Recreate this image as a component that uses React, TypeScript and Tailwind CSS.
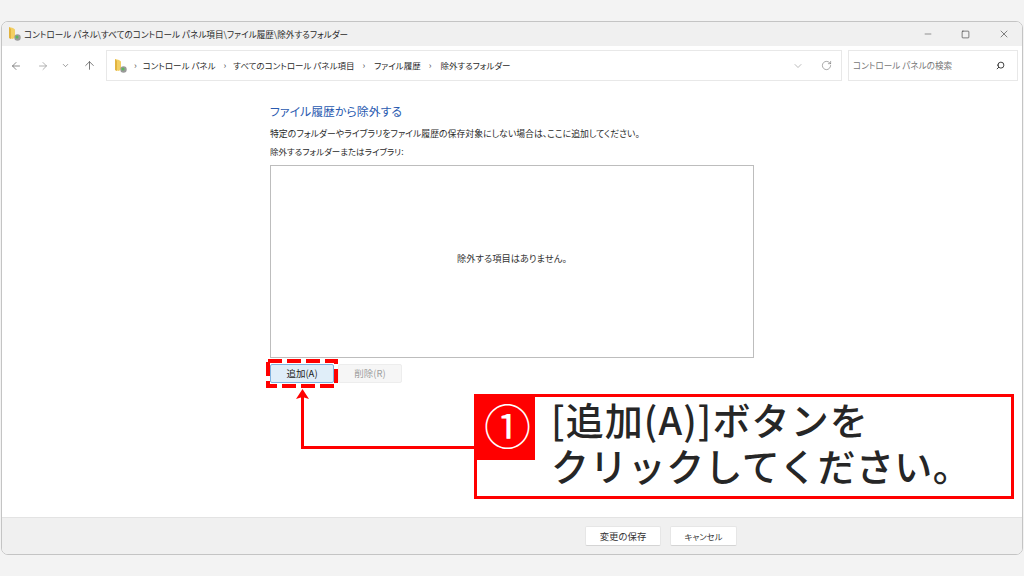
import { ArrowLeft, ArrowRight, ArrowUp, ChevronDown, RotateCw, Minus, X, Search, Square } from "lucide-react";

const jp = "[font-family:'Noto_Sans_CJK_JP','Noto_Sans',sans-serif] [font-feature-settings:'palt']";

function FolderIcon() {
  return (
    <svg width="16" height="16" viewBox="0 0 16 16" className="shrink-0">
      <path d="M2 1 L6 2 L8 3.5 L8 11 L6 13 L2 12 Z" fill="#f3cf63" />
      <path d="M2 1 L2 12 L4 13 L4 3 Z" fill="#e2b33f" />
      <circle cx="10.5" cy="11.5" r="3.2" fill="#9a9a9a" />
      <circle cx="10" cy="11" r="1.5" fill="#5cb85c" />
    </svg>
  );
}

function Sep() {
  return <span className="text-[9px] text-[#555] mx-[8px]">›</span>;
}

export default function App() {
  return (
    <div className={`relative w-[1024px] h-[576px] overflow-hidden bg-[#f3f3f3] pt-[21px] pl-px pr-px pb-[21px] ${jp}`}>
      <div className="w-full h-full flex flex-col rounded-[7px] border border-[#c4c4c4] overflow-hidden bg-white">
        {/* Title bar */}
        <div className="h-[24px] shrink-0 bg-[#f0f0f0] flex items-center pl-[5px] text-[#2a2a2a]">
          <FolderIcon />
          <span className="ml-px text-[8.6px] whitespace-nowrap">コントロール パネル\すべてのコントロール パネル項目\ファイル履歴\除外するフォルダー</span>
          <div className="ml-auto flex items-center gap-[28px] pr-[12px] text-[#333]">
            <Minus size={10} strokeWidth={1.2} />
            <Square size={9} strokeWidth={1.6} />
            <X size={12} strokeWidth={1.2} />
          </div>
        </div>
        {/* Address row */}
        <div className="h-[36px] shrink-0 flex items-center pt-[3px]">
          <div className="w-[104px] flex items-center pl-[8px] text-[#666]">
            <ArrowLeft size={12} strokeWidth={1.5} />
            <ArrowRight size={12} strokeWidth={1.5} className="ml-[15px] text-[#999]" />
            <ChevronDown size={9} strokeWidth={1.5} className="ml-[12px] text-[#555]" />
            <ArrowUp size={13} strokeWidth={1.3} className="ml-[13px] text-[#444]" />
          </div>
          <div className="w-[736px] h-[31px] border border-[#e8e8e8] flex items-center pl-[6px] pr-[9px] text-[8.5px] text-[#2a2a2a]">
            <FolderIcon />
            <span className="ml-[-3px] mr-[-2px] flex items-center">
              <Sep />
            </span>
            <span>コントロール パネル</span>
            <Sep />
            <span className="ml-[-1px]">すべてのコントロール パネル項目</span>
            <Sep />
            <span className="ml-px">ファイル履歴</span>
            <Sep />
            <span className="ml-px">除外するフォルダー</span>
            <ChevronDown size={12} strokeWidth={1} className="ml-auto text-[#777]" />
            <RotateCw size={11} strokeWidth={1.2} className="ml-[17px] text-[#666]" />
          </div>
          <div className="ml-[6px] w-[170px] h-[31px] border border-[#e8e8e8] flex items-center pl-[4px] pr-[12px] text-[8.6px] text-[#777]">
            <span>コントロール パネルの検索</span>
            <Search size={9} strokeWidth={2.5} className="ml-auto text-[#333] -scale-x-100" />
          </div>
        </div>
        {/* Content */}
        <div className="flex-1 min-h-0 pl-[268px] pt-[20px] flex flex-col items-start">
          <div className="text-[11.9px] leading-[18px] text-[#2a5ab0]">ファイル履歴から除外する</div>
          <div className="mt-[7px] text-[8.9px] leading-[14px] text-[#2a2a2a] whitespace-nowrap">特定のフォルダーやライブラリをファイル履歴の保存対象にしない場合は、ここに追加してください。</div>
          <div className="mt-[3px] text-[8.5px] leading-[14px] text-[#2a2a2a]">除外するフォルダーまたはライブラリ:</div>
          <div className="mt-[7px] w-[484px] h-[193px] border border-[#bdbdbd] flex items-center justify-center pb-[6px] text-[9.25px] text-[#333]">除外する項目はありません。</div>
          <div className="mt-[6px] flex gap-[4px] text-[9.5px]">
            <div className="w-[64px] h-[19px] flex items-center justify-center rounded-[2px] bg-[#e0eef9] border border-[#7fb2e0] text-[#222]">追加(A)</div>
            <div className="w-[64px] h-[19px] flex items-center justify-center rounded-[2px] bg-[#f6f6f6] border border-[#ededed] text-[#a0a0a0]">削除(R)</div>
          </div>
        </div>
        {/* Footer */}
        <div className="h-[37px] shrink-0 bg-[#f0f0f0] border-t border-[#e3e3e3] flex items-start pt-[8px] gap-[9px] pl-[583px] text-[#333]">
          <div className="w-[76px] h-[20px] flex items-center justify-center rounded-[2px] bg-white border border-[#e6e6e6] border-b-[#d4d4d4] text-[9.4px]">変更の保存</div>
          <div className="w-[67px] h-[20px] flex items-center justify-center rounded-[2px] bg-white border border-[#e6e6e6] border-b-[#d4d4d4] text-[8.4px]">キャンセル</div>
        </div>
      </div>

      {/* Dashed highlight and arrow */}
      <svg className="absolute left-0 top-0" width="1024" height="576">
        <rect x="268" y="361" width="68" height="25" fill="none" stroke="#ff0000" strokeWidth="4" strokeDasharray="14 5" />
        <path d="M302.5 394 V447.5 H476" fill="none" stroke="#ff0000" strokeWidth="3" />
        <path d="M302.5 389 L309 399 L302.5 397 L296 399 Z" fill="#ff0000" />
      </svg>

      {/* Callout */}
      <div className="absolute left-[474px] top-[394px] w-[540px] h-[105px] border-[3px] border-[#ff0000] bg-white">
        <div className="absolute -left-[3px] -top-[3px] w-[61px] h-[66px] bg-[#ff0000] flex items-center justify-center text-white pb-[7px] pl-[6px]">
          <span className="text-[47px] leading-none">①</span>
        </div>
        <div className="pl-[74px] -mt-px text-[38px] leading-[46px] font-medium text-[#262626] whitespace-nowrap [font-feature-settings:normal]">
          <div className="tracking-[1.1px]">[追加(A)]ボタンを</div>
          <div className="tracking-[0.4px]">クリックしてください。</div>
        </div>
      </div>
    </div>
  );
}
